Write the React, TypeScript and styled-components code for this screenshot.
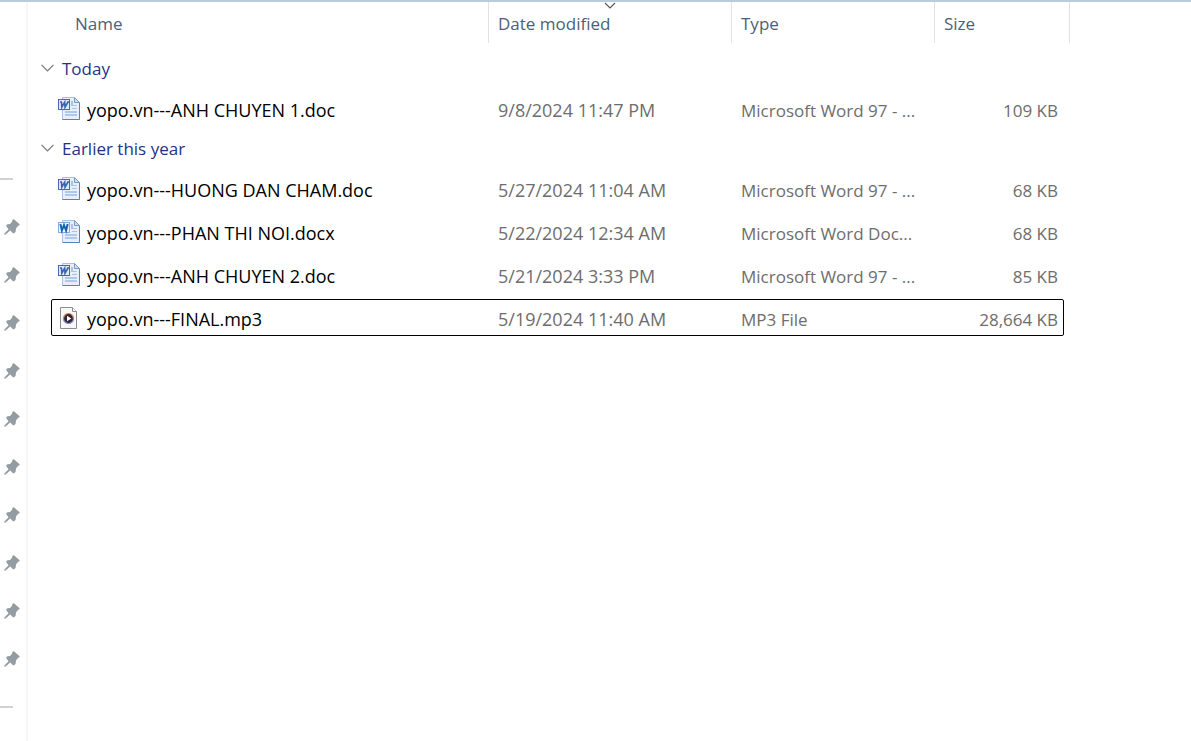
import React from 'react';
import styled, { createGlobalStyle } from 'styled-components';

const GlobalStyle = createGlobalStyle`
  * { box-sizing: border-box; }
  body {
    margin: 0;
    background: #fff;
    color: #000;
    font: 18px/24px "Open Sans", "Segoe UI", sans-serif;
  }
  button { font: inherit; color: inherit; background: none; border: 0; padding: 0; cursor: pointer; }
`;

const Explorer = styled.div`
  display: flex;
  min-height: 100vh;
  border-top: 2px solid #bccbd9;
`;

const QuickAccess = styled.nav`
  flex: 0 0 28px;
  padding-top: 176px;
  border-right: 2px solid #f6f6f6;
`;

const Divider = styled.hr`
  width: 13px;
  height: 2px;
  margin: 0;
  border: 0;
  background: #d2d2d2;
`;

const PinList = styled.ul`
  list-style: none;
  margin: 0;
  padding: 23px 0;
`;

const PinButton = styled.button`
  display: flex;
  align-items: center;
  justify-content: flex-end;
  width: 20px;
  height: 48px;
  svg { display: block; }
`;

const Main = styled.main`
  flex: 1;
  min-width: 0;
  overflow-x: auto;
`;

const FileTable = styled.table`
  width: 1042px;
  table-layout: fixed;
  border-collapse: separate;
  border-spacing: 0;
`;

const Col = styled.col<{ $width: number }>`
  width: ${(p) => p.$width}px;
`;

const HeaderCell = styled.th<{ $first?: boolean }>`
  position: relative;
  height: 41px;
  padding: 2px 0 0 ${(p) => (p.$first ? 47 : 9)}px;
  border-right: 1px solid #e2e2e2;
  color: #4c607a;
  font-size: 17px;
  font-weight: 400;
  text-align: left;
`;

const SortMark = styled.svg`
  position: absolute;
  top: 0;
  left: 50%;
  margin-left: -6px;
`;

const GroupCell = styled.th<{ $height: number }>`
  height: ${(p) => p.$height}px;
  padding: 0 0 2px 13px;
  vertical-align: bottom;
  text-align: left;
  font-size: 17px;
  font-weight: 400;
  color: #1e3287;
`;

const GroupButton = styled.button`
  display: flex;
  align-items: center;
  gap: 7px;
  height: 35px;
`;

const FileRow = styled.tr`
  position: relative;
`;

const Cell = styled.td<{ $compact?: boolean; $right?: boolean }>`
  height: 43px;
  padding: ${(p) => (p.$compact ? 4 : 2)}px ${(p) => (p.$right ? 12 : 9)}px 0 9px;
  color: #6d6d6d;
  font-size: ${(p) => (p.$compact ? 17 : 18)}px;
  text-align: ${(p) => (p.$right ? 'right' : 'left')};
  white-space: nowrap;
  overflow: hidden;
  text-overflow: ellipsis;
`;

const NameCell = styled(Cell)<{ $focused?: boolean }>`
  padding: 0 0 0 29px;
  color: #000;
  &::after {
    content: "";
    display: ${(p) => (p.$focused ? 'block' : 'none')};
    position: absolute;
    inset: 3px 6px 3px 23px;
    border: 1px solid #000;
    border-radius: 2px;
  }
`;

const NameContent = styled.div`
  display: flex;
  align-items: center;
  gap: 6px;
  svg { flex: none; }
`;

const Label = styled.span`
  padding-top: 2px;
`;

const PinIcon = () => (
  <svg width="16" height="16" viewBox="0 0 16 16" aria-hidden="true">
    <path
      fill="#929ca4"
      d="M8.8 0.3 L10.2 0.6 L15.6 5.3 L15.6 6.3 L14.2 6.8 L12 9.6 L11.6 12.8 L10.2 14.2 L9 14.2 L6.2 11.6 L1.6 15.6 L0.3 15.6 L0.3 14.4 L4.6 10.3 L2.4 7.4 L2.4 6.3 L3.4 5.3 L6.2 5 L8 2.8 Z"
    />
  </svg>
);

const Chevron = () => (
  <svg width="14" height="8" viewBox="0 0 14 8" aria-hidden="true">
    <path d="M.5 .8 L6.5 6.8 L12.5 .8" fill="none" stroke="#777" strokeWidth="1.2" />
  </svg>
);

const WordIcon = ({ modern }: { modern?: boolean }) => (
  <svg width="24" height="24" viewBox="0 0 24 24" aria-hidden="true">
    <path d="M5.5 .5 H17.5 L22.5 5.5 V22.5 H5.5 Z" fill="#e6effb" stroke="#a9c1e2" />
    <path d="M22.5 6 V22.5 H5.5" fill="none" stroke="#5f80b4" />
    <path d="M17.5 .5 V5.5 H22.5 Z" fill="#cfdff4" stroke="#7899c8" />
    <rect x="14" y="4" width="2" height="5" fill="#a9c3e7" />
    <path d="M15 8.5 H20 M15 11.5 H20" stroke="#a9c3e7" />
    <path d="M8 15 H20 M8 18 H20" stroke="#9fbde6" strokeWidth="1.6" />
    <rect x="1.5" y="2.5" width="11" height="10" fill={modern ? '#eef6fd' : '#e1e9f8'} stroke={modern ? '#86acd8' : '#4468b2'} />
    {modern ? (
      <path d="M3.4 4 L4.9 10.6 L7 5 L9.1 10.6 L10.7 4" fill="none" stroke="#1762b5" strokeWidth="2" />
    ) : (
      <path d="M3 5 H5 M4.5 5 L4.8 10.2 L7.7 5.2 L8 10.2 L11 5 M10 5 H12" fill="none" stroke="#3f63b0" strokeWidth="1.6" />
    )}
  </svg>
);

const MediaIcon = () => (
  <svg width="24" height="24" viewBox="0 0 24 24" aria-hidden="true">
    <path d="M3.5 1.5 H15.5 L19.5 5.5 V22.5 H3.5 Z" fill="#f8f8f8" stroke="#8c8c8c" />
    <path d="M15.5 1.5 V5.5 H19.5" fill="#fff" stroke="#8c8c8c" />
    <circle cx="11.5" cy="12.5" r="5" fill="#2c2635" />
    <path d="M6.5 12.5 A5 5 0 0 1 16.5 12.5" fill="none" stroke="#d98b62" strokeWidth="1.2" />
    <path d="M6.5 12.5 A5 5 0 0 0 16.5 12.5" fill="none" stroke="#8a8cc0" strokeWidth="1.2" />
    <path d="M10 9.8 L14.4 12.5 L10 15.2 Z" fill="#fff" />
  </svg>
);

type FileItem = {
  name: string;
  date: string;
  type: string;
  size: string;
  kind: 'doc' | 'docx' | 'media';
  focused?: boolean;
};

const groups: { title: string; height: number; files: FileItem[] }[] = [
  {
    title: 'Today',
    height: 44,
    files: [
      { name: 'yopo.vn---ANH CHUYEN 1.doc', date: '9/8/2024 11:47 PM', type: 'Microsoft Word 97 - ...', size: '109 KB', kind: 'doc' },
    ],
  },
  {
    title: 'Earlier this year',
    height: 37,
    files: [
      { name: 'yopo.vn---HUONG DAN CHAM.doc', date: '5/27/2024 11:04 AM', type: 'Microsoft Word 97 - ...', size: '68 KB', kind: 'doc' },
      { name: 'yopo.vn---PHAN THI NOI.docx', date: '5/22/2024 12:34 AM', type: 'Microsoft Word Doc...', size: '68 KB', kind: 'docx' },
      { name: 'yopo.vn---ANH CHUYEN 2.doc', date: '5/21/2024 3:33 PM', type: 'Microsoft Word 97 - ...', size: '85 KB', kind: 'doc' },
      { name: 'yopo.vn---FINAL.mp3', date: '5/19/2024 11:40 AM', type: 'MP3 File', size: '28,664 KB', kind: 'media', focused: true },
    ],
  },
];

const pins = Array.from({ length: 10 }, (_, i) => i);

export default function App() {
  return (
    <>
      <GlobalStyle />
      <Explorer>
        <QuickAccess aria-label="Quick access">
          <Divider />
          <PinList>
            {pins.map((i) => (
              <li key={i}>
                <PinButton type="button" aria-label={`Pinned folder ${i + 1}`}>
                  <PinIcon />
                </PinButton>
              </li>
            ))}
          </PinList>
          <Divider />
        </QuickAccess>
        <Main>
          <FileTable>
            <colgroup>
              <Col $width={461} />
              <Col $width={243} />
              <Col $width={203} />
              <Col $width={135} />
            </colgroup>
            <thead>
              <tr>
                <HeaderCell $first scope="col"><button type="button">Name</button></HeaderCell>
                <HeaderCell scope="col" aria-sort="descending">
                  <SortMark width="12" height="8" viewBox="0 0 12 8" aria-hidden="true">
                    <path d="M1 1 L6 6 L11 1" fill="none" stroke="#555" strokeWidth="1.1" />
                  </SortMark>
                  <button type="button">Date modified</button>
                </HeaderCell>
                <HeaderCell scope="col"><button type="button">Type</button></HeaderCell>
                <HeaderCell scope="col"><button type="button">Size</button></HeaderCell>
              </tr>
            </thead>
            {groups.map((group) => (
              <tbody key={group.title}>
                <tr>
                  <GroupCell colSpan={4} scope="rowgroup" $height={group.height}>
                    <GroupButton type="button" aria-expanded="true">
                      <Chevron />
                      <Label>{group.title}</Label>
                    </GroupButton>
                  </GroupCell>
                </tr>
                {group.files.map((file) => (
                  <FileRow key={file.name}>
                    <NameCell $focused={file.focused}>
                      <NameContent>
                        {file.kind === 'media' ? <MediaIcon /> : <WordIcon modern={file.kind === 'docx'} />}
                        <Label>{file.name}</Label>
                      </NameContent>
                    </NameCell>
                    <Cell>{file.date}</Cell>
                    <Cell $compact>{file.type}</Cell>
                    <Cell $compact $right>{file.size}</Cell>
                  </FileRow>
                ))}
              </tbody>
            ))}
          </FileTable>
        </Main>
      </Explorer>
    </>
  );
}
